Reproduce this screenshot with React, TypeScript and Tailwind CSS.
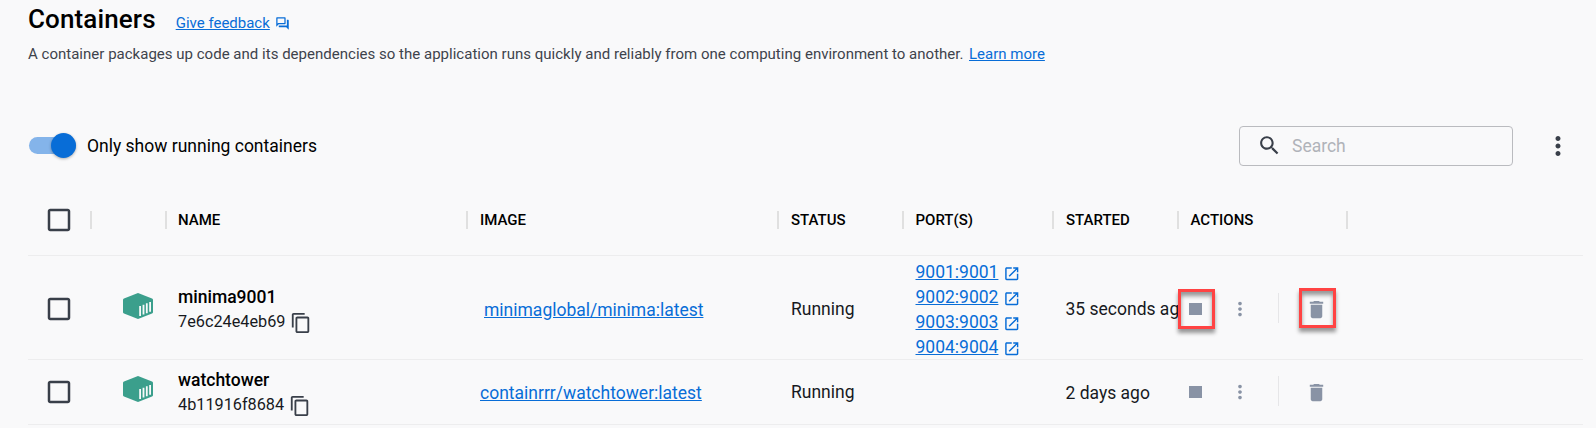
import type { ReactNode } from 'react';

const BLUE = 'text-[#086dd7]';

function Icon({ d, className }: { d: string; className: string }) {
  return (
    <svg viewBox="0 0 24 24" fill="currentColor" className={`block shrink-0 ${className}`}>
      <path d={d} />
    </svg>
  );
}

const FORUM = 'M15 4v7H5.17L4 12.17V4h11m1-2H3c-.55 0-1 .45-1 1v14l4-4h10c.55 0 1-.45 1-1V3c0-.55-.45-1-1-1zm5 4h-2v9H6v2c0 .55.45 1 1 1h11l4 4V7c0-.55-.45-1-1-1z';
const SEARCH = 'M15.5 14h-.79l-.28-.27C15.41 12.59 16 11.11 16 9.5 16 5.91 13.09 3 9.5 3S3 5.91 3 9.5 5.91 16 9.5 16c1.61 0 3.09-.59 4.23-1.57l.27.28v.79l5 4.99L20.49 19l-4.99-5zm-6 0C7.01 14 5 11.99 5 9.5S7.01 5 9.5 5 14 7.01 14 9.5 11.99 14 9.5 14z';
const MORE = 'M12 8c1.1 0 2-.9 2-2s-.9-2-2-2-2 .9-2 2 .9 2 2 2zm0 2c-1.1 0-2 .9-2 2s.9 2 2 2 2-.9 2-2-.9-2-2-2zm0 6c-1.1 0-2 .9-2 2s.9 2 2 2 2-.9 2-2-.9-2-2-2z';
const BOX = 'M19 5v14H5V5h14m0-2H5c-1.1 0-2 .9-2 2v14c0 1.1.9 2 2 2h14c1.1 0 2-.9 2-2V5c0-1.1-.9-2-2-2z';
const COPY = 'M16 1H4c-1.1 0-2 .9-2 2v14h2V3h12V1zm3 4H8c-1.1 0-2 .9-2 2v14c0 1.1.9 2 2 2h11c1.1 0 2-.9 2-2V7c0-1.1-.9-2-2-2zm0 16H8V7h11v14z';
const OPEN = 'M19 19H5V5h7V3H5c-1.11 0-2 .9-2 2v14c0 1.1.89 2 2 2h14c1.1 0 2-.9 2-2v-7h-2v7zM14 3v2h3.59l-9.83 9.83 1.41 1.41L19 6.41V10h2V3h-7z';
const TRASH = 'M6 19c0 1.1.9 2 2 2h8c1.1 0 2-.9 2-2V7H6v12zM19 4h-3.5l-1-1h-5l-1 1H5v2h14V4z';

function T({ children, className = '' }: { children?: ReactNode; className?: string }) {
  return <span className={`whitespace-nowrap ${className}`}>{children}</span>;
}

function ContainerIcon() {
  return (
    <svg viewBox="0 0 30 26" className="block h-[26px] w-[30px]">
      <path d="M15 0 29 5.4Q30 5.8 30 6.8V19.2Q30 20.2 29 20.6L15 26 1 20.6Q0 20.2 0 19.2V6.8Q0 5.8 1 5.4Z" fill="#3b9f8c" />
      <path d="M17.1 13V23M20.5 11.7V21.6M23.8 10.3V20.2M27.1 9V18.8" stroke="#f9f9fa" strokeWidth="1.8" />
    </svg>
  );
}

const GRID = 'grid grid-cols-[64px_75px_301px_311px_125px_150px_125px_169px_1fr]';

function Head({ children, className = 'pl-[12px]' }: { children?: ReactNode; className?: string }) {
  return (
    <div className={`flex items-center justify-between ${className}`}>
      <T className="text-[15px] font-medium text-black">{children}</T>
      <span className="h-[18px] w-[2px] bg-[#e0e0e0]" />
    </div>
  );
}

interface Row {
  name: string;
  id: string;
  image: string;
  imageInset: string;
  ports: string[];
  started: string;
  startedInset: string;
  marked: boolean;
  size: string;
}

const rows: Row[] = [
  { name: 'minima9001', id: '7e6c24e4eb69', image: 'minimaglobal/minima:latest', imageInset: 'pl-[16px]', ports: ['9001:9001', '9002:9002', '9003:9003', '9004:9004'], started: '35 seconds ag', startedInset: 'pt-0', marked: true, size: 'h-[104px] pt-[3px]' },
  { name: 'watchtower', id: '4b11916f8684', image: 'containrrr/watchtower:latest', imageInset: 'pl-[12px]', ports: [], started: '2 days ago', startedInset: 'pt-[2px]', marked: false, size: 'h-[65px]' },
];

function Mark({ className }: { className: string }) {
  return <span className={`absolute h-10 w-[37px] border-[3px] border-[#ff4343] shadow-[0_4px_4px_rgba(0,0,0,0.4),inset_0_4px_4px_rgba(0,0,0,0.4)] ${className}`} />;
}

function ContainerRow({ row }: { row: Row }) {
  return (
    <div className={`${GRID} ${row.size} items-center border-b border-[#ededee] text-[17.5px]`}>
      <div className="pl-[16px]"><Icon d={BOX} className="size-[30px] text-[#393f49]" /></div>
      <div className="pb-[6px] pl-[31px]"><ContainerIcon /></div>
      <div className="flex flex-col pt-px pl-[11px] text-black">
        <T className="leading-[24px] font-medium">{row.name}</T>
        <div className="flex h-[25px] items-center gap-[5px]">
          <T className="pt-px text-[16.25px] text-[#17191e]">{row.id}</T>
          <Icon d={COPY} className="mt-[2px] size-[22px] text-[#393f49]" />
        </div>
      </div>
      <div className={`pt-[2px] ${row.imageInset}`}><T className={`${BLUE} underline`}>{row.image}</T></div>
      <div className="pl-[12px]"><T>Running</T></div>
      <div className="-mb-px flex flex-col pt-px pl-[11.5px]">
        {row.ports.map((p) => (
          <div key={p} className={`flex h-[25px] items-center gap-[4.5px] ${BLUE}`}>
            <T className="underline">{p}</T>
            <Icon d={OPEN} className="mt-[3px] size-[17.5px]" />
          </div>
        ))}
      </div>
      <div className={`pl-[11.5px] ${row.startedInset}`}><T>{row.started}</T></div>
      <div className="relative flex h-[30px] items-center text-[#8993a5]">
        {row.marked && (
          <>
            <Mark className="top-[-5px] left-[-1px]" />
            <Mark className="top-[-6px] left-[120px]" />
          </>
        )}
        <span className="ml-[10px] size-[12.5px] bg-[#8993a5]" />
        <Icon d={MORE} className="ml-[27.5px] size-[22px]" />
        <span className="mb-[3px] ml-[27px] h-[30px] w-px bg-[#e6e6e8]" />
        <Icon d={TRASH} className="ml-[26px] size-[23px]" />
      </div>
    </div>
  );
}

export default function App() {
  return (
    <div className="flex h-[428px] flex-col overflow-hidden bg-[#f9f9fa] pl-7 font-['Roboto',sans-serif] text-[#17191e]">
      <div className="flex h-[39px] items-center">
        <h1 className="text-[26px] font-medium tracking-[0.12px] text-black"><T>Containers</T></h1>
        <a className={`ml-5 flex items-center gap-[5px] pt-[7px] text-[15px] ${BLUE}`}>
          <T className="underline">Give feedback</T>
          <Icon d={FORUM} className="size-[15px]" />
        </a>
      </div>
      <p className="mt-[4px] flex text-[15px] leading-[22px] text-[#3e434c]">
        <T className="tracking-[0.015px]">A container packages up code and its dependencies so the application runs quickly and reliably from one computing environment to another.</T>
        <T className={`ml-[5.5px] underline ${BLUE}`}>Learn more</T>
      </p>
      <div className="mt-[61px] flex h-10 items-center">
        <div className="mb-px ml-px flex h-[17px] w-[47px] items-center justify-end rounded-full bg-[#84b4ea]">
          <span className="size-[25px] shrink-0 rounded-full bg-[#086dd7] shadow-[0_1px_3px_rgba(0,0,0,0.3)]" />
        </div>
        <span className="ml-[11px] text-[17.5px] text-black"><T>Only show running containers</T></span>
        <div className="ml-auto flex h-10 w-[274px] items-center rounded border border-[#babbbf] pl-[17px] text-[17.5px] text-[#b0b3b9]">
          <Icon d={SEARCH} className="mb-[2px] size-[25px] text-[#393f49]" />
          <span className="ml-[10px]"><T>Search</T></span>
        </div>
        <Icon d={MORE} className="mr-[23px] ml-[30px] size-[30px] text-[#393f49]" />
      </div>
      <div className="mt-[18px] mr-[13px]">
        <div className={`${GRID} h-[72px] items-center border-b border-[#ededee] pt-px`}>
          <div className="flex items-center justify-between pl-[16px]">
            <Icon d={BOX} className="size-[30px] text-[#393f49]" />
            <span className="h-[18px] w-[2px] bg-[#e0e0e0]" />
          </div>
          <Head />
          <Head className="pl-[11px]">NAME</Head>
          <Head>IMAGE</Head>
          <Head>STATUS</Head>
          <Head className="pl-[11.5px]">PORT(S)</Head>
          <Head>STARTED</Head>
          <Head className="pl-[11.5px]">ACTIONS</Head>
        </div>
        {rows.map((r) => <ContainerRow key={r.name} row={r} />)}
      </div>
    </div>
  );
}
